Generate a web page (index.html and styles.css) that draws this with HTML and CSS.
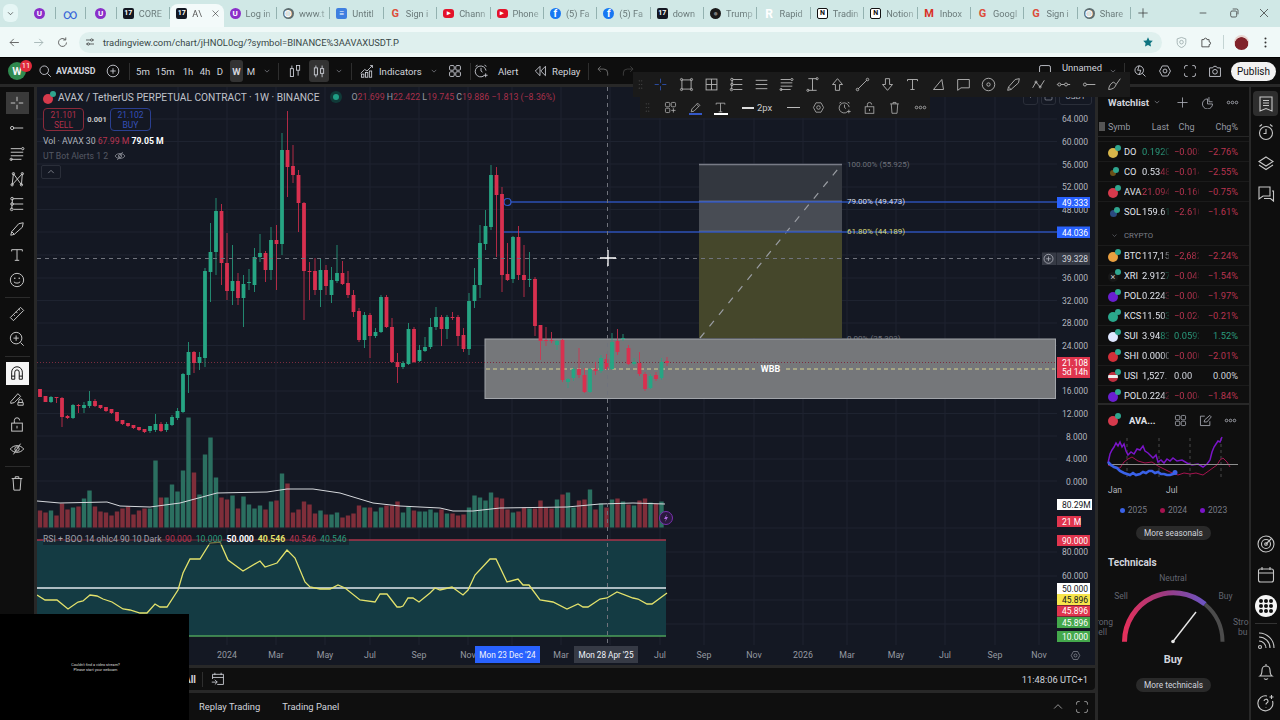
FILE: index.html
```html
<!DOCTYPE html>
<html lang="en">
<head>
  <meta charset="UTF-8">
  <title>AVAXUSD chart</title>
  <link rel="stylesheet" href="styles.css">
</head>
<body>
  <svg class="sprite" width="0" height="0">
    <symbol id="i-back" viewBox="0 0 18 18"><path d="M15 9H3M8 4L3 9l5 5"/></symbol>
    <symbol id="i-forward" viewBox="0 0 18 18"><path d="M3 9h12M10 4l5 5-5 5"/></symbol>
    <symbol id="i-reload" viewBox="0 0 18 18"><path d="M14.5 9a5.5 5.5 0 1 1-1.6-3.9M13.5 2v3.5H10"/></symbol>
    <symbol id="i-tune" viewBox="0 0 18 18"><path d="M3 6h7M13 6h2M3 12h2M8 12h7"/><circle cx="11.5" cy="6" r="1.7"/><circle cx="6.5" cy="12" r="1.7"/></symbol>
    <symbol id="i-star" viewBox="0 0 18 18"><path class="solid" d="M9 2l2.2 4.6 5 .7-3.6 3.5.9 5L9 13.4l-4.5 2.4.9-5L1.8 7.3l5-.7z"/></symbol>
    <symbol id="i-shield" viewBox="0 0 18 18"><path d="M9 2l6 2v5c0 4-3 6-6 7-3-1-6-3-6-7V4z"/><circle cx="9" cy="8.5" r="2.5"/></symbol>
    <symbol id="i-puzzle" viewBox="0 0 18 18"><path d="M4 5h3a2 2 0 0 1 4 0h3v3a2 2 0 0 1 0 4v3H4z"/></symbol>
    <symbol id="i-kebab" viewBox="0 0 18 18"><circle class="solid" cx="9" cy="3.5" r="1.4"/><circle class="solid" cx="9" cy="9" r="1.4"/><circle class="solid" cx="9" cy="14.5" r="1.4"/></symbol>
    <symbol id="i-search" viewBox="0 0 18 18"><circle cx="8" cy="8" r="5.5"/><path d="M12 12l4.5 4.5"/></symbol>
    <symbol id="i-plus-circle" viewBox="0 0 18 18"><circle cx="9" cy="9" r="7.5"/><path d="M9 5.5v7M5.5 9h7"/></symbol>
    <symbol id="i-chev" viewBox="0 0 18 18"><path d="M5 7l4 4 4-4"/></symbol>
    <symbol id="i-bars" viewBox="0 0 18 18"><rect x="3" y="6" width="4" height="10"/><rect x="11" y="2" width="4" height="6"/><path d="M5 2v4M13 8v7"/></symbol>
    <symbol id="i-candle" viewBox="0 0 18 18"><rect x="3" y="5" width="4" height="9"/><rect x="11" y="6" width="4" height="6"/><path d="M5 2v3M5 14v3M13 2v4M13 12v5"/></symbol>
    <symbol id="i-ind" viewBox="0 0 18 18"><path d="M1 12l5-5 3 2 7-7M13 2h3v3"/><rect x="2" y="13" width="3" height="4"/><rect x="7" y="11" width="3" height="6"/><rect x="12" y="9" width="3" height="8"/></symbol>
    <symbol id="i-grid" viewBox="0 0 18 18"><rect x="2" y="2" width="6" height="6" rx="1.5"/><rect x="10" y="2" width="6" height="6" rx="1.5"/><rect x="2" y="10" width="6" height="6" rx="1.5"/><rect x="10" y="10" width="6" height="6" rx="1.5"/></symbol>
    <symbol id="i-grid-plus" viewBox="0 0 18 18"><rect x="2" y="2" width="6" height="6" rx="1.5"/><rect x="10" y="2" width="6" height="6" rx="1.5"/><rect x="2" y="10" width="6" height="6" rx="1.5"/><path d="M13 10v6M10 13h6"/></symbol>
    <symbol id="i-alarm" viewBox="0 0 18 18"><path d="M13 15A7 7 0 1 1 15.5 8.5M9 5v4l2 1.5M2 3l2.5-1.5M16 3l-2.500-1.500M15 12v5M12.5 14.5h5"/></symbol>
    <symbol id="i-clock" viewBox="0 0 18 18"><circle cx="9" cy="10" r="6.5"/><path d="M9 6v4.5H6.5M2.5 3.500L5 1.5M15.5 3.5L13 1.5"/></symbol>
    <symbol id="i-replay" viewBox="0 0 18 18"><path d="M9 3L3 9l6 6zM16 3l-6 6 6 6z"/></symbol>
    <symbol id="i-undo" viewBox="0 0 18 18"><path d="M6 3L2.5 6.5 6 10M3 6.5h7a5 5 0 0 1 5 5V15"/></symbol>
    <symbol id="i-redo" viewBox="0 0 18 18"><path d="M12 3l3.5 3.5L12 10M15 6.5H8a5 5 0 0 0-5 5V15"/></symbol>
    <symbol id="i-square" viewBox="0 0 18 18"><rect x="2" y="2" width="14" height="14" rx="2"/></symbol>
    <symbol id="i-quick" viewBox="0 0 18 18"><circle cx="8" cy="8" r="5.5"/><path d="M12 12l4 4M8 2l-2 6h4l-2 6"/></symbol>
    <symbol id="i-hex" viewBox="0 0 18 18"><path d="M5.5 2.5h7L16 9l-3.5 6.500h-7L2 9z"/><circle cx="9" cy="9" r="2.5"/></symbol>
    <symbol id="i-full" viewBox="0 0 18 18"><path d="M2 6V4a2 2 0 0 1 2-2h2M12 2h2a2 2 0 0 1 2 2v2M16 12v2a2 2 0 0 1-2 2h-2M6 16H4a2 2 0 0 1-2-2v-2"/></symbol>
    <symbol id="i-camera" viewBox="0 0 18 18"><path d="M2 5h4l1.5-2h3L12 5h4v11H2z"/><circle cx="9" cy="10" r="3"/></symbol>
    <symbol id="i-cross" viewBox="0 0 18 18"><path d="M9 2v5M9 11v5M2 9h5M11 9h5"/></symbol>
    <symbol id="i-trend" viewBox="0 0 18 18"><circle cx="3.5" cy="9" r="1.8"/><path d="M5.3 9H16"/></symbol>
    <symbol id="i-ray" viewBox="0 0 18 18"><circle cx="4" cy="9" r="1.8"/><circle cx="12" cy="9" r="1.8"/><path d="M1 9h1M6 9h4M14 9h3"/></symbol>
    <symbol id="i-fib" viewBox="0 0 18 18"><path d="M2 3h12M2 7h14M2 11h14M2 15h12"/><circle cx="15.5" cy="3" r="1.3"/><circle cx="2.5" cy="15" r="1.3"/></symbol>
    <symbol id="i-lines" viewBox="0 0 18 18"><path d="M2 4h14M2 9h14M2 14h14"/></symbol>
    <symbol id="i-xabcd" viewBox="0 0 18 18"><path d="M3.5 15.5L5 3l9 12.5L15 3M3.5 15.5L15 3"/><circle cx="5" cy="3" r="1.3"/><circle cx="15" cy="3" r="1.3"/><circle cx="3.5" cy="15.5" r="1.3"/><circle cx="14" cy="15.5" r="1.3"/></symbol>
    <symbol id="i-pitch" viewBox="0 0 18 18"><path d="M5 3h11M5 9h11M5 15h11M4 3L3 15"/><circle cx="3.5" cy="3" r="1.5"/><circle cx="3.5" cy="9" r="1.5"/><circle cx="3" cy="15" r="1.5"/></symbol>
    <symbol id="i-brush" viewBox="0 0 18 18"><path d="M2 16l1-4 8-9 5-1-1 5-9 8zM3 12l3 3"/></symbol>
    <symbol id="i-pencil" viewBox="0 0 18 18"><path d="M3 15l1-4 8-8 3 3-8 8zM10.5 4.5l3 3"/></symbol>
    <symbol id="i-text" viewBox="0 0 18 18"><path d="M3 3h12v2M3 3v2M9 3v12M6.5 15h5"/></symbol>
    <symbol id="i-smile" viewBox="0 0 18 18"><circle cx="9" cy="9" r="7.5"/><circle class="solid" cx="6.5" cy="7" r=".9"/><circle class="solid" cx="11.5" cy="7" r=".9"/><path d="M5.5 11c1 2 6 2 7 0"/></symbol>
    <symbol id="i-ruler" viewBox="0 0 18 18"><path d="M1.5 13L13 1.5 16.5 5 5 16.5zM5 9.5l1.5 1.5M8 6.5L9.5 8M11 3.5L12.5 5"/></symbol>
    <symbol id="i-zoom" viewBox="0 0 18 18"><circle cx="8" cy="8" r="6.5"/><path d="M13 13l3.5 3.5M8 5v6M5 8h6"/></symbol>
    <symbol id="i-magnet" viewBox="0 0 18 18"><path d="M3 16V8a6 6 0 0 1 12 0v8h-3.500V8a2.500 2.500 0 0 0-5 0v8zM3 12.5h3.5M11.5 12.5H15"/></symbol>
    <symbol id="i-pen-lock" viewBox="0 0 18 18"><path d="M2 12L10 3l3 3-7 7-4 1zM10 16v-3h6v3zM11 13v-2a2 2 0 0 1 4 0v2"/></symbol>
    <symbol id="i-lock" viewBox="0 0 18 18"><rect x="3" y="8" width="12" height="9"/><path d="M6 8V5a3 3 0 0 1 6 0M9 11v3"/></symbol>
    <symbol id="i-trash" viewBox="0 0 18 18"><path d="M3 4h12M7 4V2h4v2M4.5 4l1 13h7l1-13"/></symbol>
    <symbol id="i-eye-off" viewBox="0 0 18 18"><path d="M1.5 9C5 4 13 4 16.5 9 13 14 5 14 1.5 9zM5 15L13 3"/><circle cx="9" cy="9" r="2.5"/></symbol>
    <symbol id="i-up" viewBox="0 0 18 18"><path d="M4 11l5-5 5 5"/></symbol>
    <symbol id="i-arrow-up" viewBox="0 0 18 18"><path d="M9 2L3 9h3.5v7h5V9H15z"/></symbol>
    <symbol id="i-arrow-down" viewBox="0 0 18 18"><path d="M9 16L3 9h3.5V2h5v7H15z"/></symbol>
    <symbol id="i-box" viewBox="0 0 18 18"><rect x="3.5" y="3.5" width="11" height="11"/><circle cx="3" cy="3" r="1.3"/><circle cx="15" cy="3" r="1.3"/><circle cx="3" cy="15" r="1.3"/><circle cx="15" cy="15" r="1.3"/></symbol>
    <symbol id="i-box-grid" viewBox="0 0 18 18"><rect x="2.5" y="2.5" width="13" height="13"/><path d="M9 2.5v13M2.5 9h13"/></symbol>
    <symbol id="i-ibar" viewBox="0 0 18 18"><path d="M4 2h10M4 16h10M9 2v14"/><circle cx="14.5" cy="2" r="1.3"/><circle cx="3.5" cy="16" r="1.3"/></symbol>
    <symbol id="i-line" viewBox="0 0 18 18"><path d="M3.5 14.5l11-11"/><circle cx="3" cy="15" r="1.5"/><circle cx="15" cy="3" r="1.5"/></symbol>
    <symbol id="i-tri" viewBox="0 0 18 18"><path d="M3 15L13 3l2 12z"/></symbol>
    <symbol id="i-note" viewBox="0 0 18 18"><path d="M2 3h14v10H6l-4 3z"/></symbol>
    <symbol id="i-circle" viewBox="0 0 18 18"><circle cx="9" cy="9" r="7.5"/><circle cx="9" cy="9" r="2"/></symbol>
    <symbol id="i-zig" viewBox="0 0 18 18"><path d="M2 13l4-7 5 6 5-8"/><circle cx="6" cy="6" r="1.2"/><circle cx="11" cy="12" r="1.2"/></symbol>
    <symbol id="i-eraser" viewBox="0 0 18 18"><path d="M2 15c0-4 3-8 6-9l3 3c-1 4-5 6-9 6zM11 9l5-7"/></symbol>
    <symbol id="i-dots" viewBox="0 0 18 18"><circle cx="3.5" cy="9" r="1.8"/><circle cx="9" cy="9" r="1.8"/><circle cx="14.5" cy="9" r="1.8"/></symbol>
    <symbol id="i-grip" viewBox="0 0 18 18"><circle class="solid" cx="7" cy="3" r="1"/><circle class="solid" cx="11" cy="3" r="1"/><circle class="solid" cx="7" cy="9" r="1"/><circle class="solid" cx="11" cy="9" r="1"/><circle class="solid" cx="7" cy="15" r="1"/><circle class="solid" cx="11" cy="15" r="1"/></symbol>
    <symbol id="i-plus" viewBox="0 0 18 18"><path d="M9 2v14M2 9h14"/></symbol>
    <symbol id="i-pie" viewBox="0 0 18 18"><path d="M9 4a7 7 0 1 0 7 7H9zM11 1.5V8h5"/></symbol>
    <symbol id="i-list" viewBox="0 0 18 18"><path d="M3 2h12v14l-6-2.5L3 16zM6 5.5h6M6 8h6M6 10.5h6"/></symbol>
    <symbol id="i-layers" viewBox="0 0 18 18"><path d="M9 3l7 4.5-7 4.5-7-4.5zM2 11l7 4.5 7-4.5"/></symbol>
    <symbol id="i-chat" viewBox="0 0 18 18"><path d="M2 2h11v9H6l-4 3zM15 6h1.5v10l-3-2.5H7"/></symbol>
    <symbol id="i-edit" viewBox="0 0 18 18"><path d="M15 10v6H2V3h6M7 11l1-3 7-6 2 2-6 7z"/></symbol>
    <symbol id="i-target" viewBox="0 0 18 18"><circle cx="9" cy="9" r="8"/><circle cx="9" cy="9" r="4.5"/><circle cx="9" cy="9" r="1.3"/><path d="M9 9l5.5-5.5"/></symbol>
    <symbol id="i-cal" viewBox="0 0 18 18"><rect x="1.5" y="3" width="15" height="13" rx="2"/><path d="M1.5 7h15M5 1v3M13 1v3"/></symbol>
    <symbol id="i-cal-go" viewBox="0 0 18 18"><path d="M2 9V3h14v13H8M2 7h14M5 1v3M13 1v3M1 13h7M5 10l3 3-3 3"/></symbol>
    <symbol id="i-signal" viewBox="0 0 18 18"><path d="M2 9a7 7 0 0 1 7 7M2 5a11 11 0 0 1 11 11M2 1a15 15 0 0 1 15 15"/><circle cx="3" cy="15" r="1.5"/></symbol>
    <symbol id="i-bell" viewBox="0 0 18 18"><path d="M3 13c1.5-1 2-3 2-6a4 4 0 0 1 8 0c0 3 .5 5 2 6zM7 15.5c1 1.2 3 1.2 4 0M9 1v2"/></symbol>
    <symbol id="i-help" viewBox="0 0 18 18"><path d="M15.5 7A7.5 7.5 0 1 1 10 2"/><path d="M7 7a2 2 0 1 1 2.8 2c-.6.4-.8.7-.8 1.5M9 13v.5M14.5 1v4M12.5 3h4"/></symbol>
    <symbol id="i-min" viewBox="0 0 18 18"><path d="M4 9h10"/></symbol>
    <symbol id="i-restore" viewBox="0 0 18 18"><rect x="4" y="6" width="9" height="9" rx="2"/><path d="M7 3h6a2 2 0 0 1 2 2v6"/></symbol>
    <symbol id="i-close" viewBox="0 0 18 18"><path d="M3 3l12 12M15 3L3 15"/></symbol>
  </svg>

  <div class="page">
    <header class="tabstrip">
      <button class="tab-menu"><svg class="icon"><use href="#i-chev"/></svg></button>
      <div class="tab pinned"><span class="fav fav-proton">U</span></div>
      <div class="tab pinned"><span class="fav fav-meta">∞</span></div>
      <div class="tab pinned"><span class="fav fav-proton">U</span></div>
      <div class="tab"><span class="fav fav-tv">17</span><span class="tab-title">CORE</span></div>
      <div class="tab active"><span class="fav fav-tv">17</span><span class="tab-title">A\</span><svg class="icon tab-x"><use href="#i-close"/></svg></div>
      <div class="tab"><span class="fav fav-proton">U</span><span class="tab-title">Log in</span></div>
      <div class="tab"><span class="fav fav-globe">◍</span><span class="tab-title">www.t</span></div>
      <div class="tab"><span class="fav fav-doc">≡</span><span class="tab-title">Untitl</span></div>
      <div class="tab"><span class="fav fav-g">G</span><span class="tab-title">Sign i</span></div>
      <div class="tab"><span class="fav fav-yt">▸</span><span class="tab-title">Chann</span></div>
      <div class="tab"><span class="fav fav-yt">▸</span><span class="tab-title">Phone</span></div>
      <div class="tab"><span class="fav fav-fb">f</span><span class="tab-title">(5) Fa</span></div>
      <div class="tab"><span class="fav fav-fb">f</span><span class="tab-title">(5) Fa</span></div>
      <div class="tab"><span class="fav fav-tv">17</span><span class="tab-title">down</span></div>
      <div class="tab"><span class="fav fav-trump">●</span><span class="tab-title">Trump</span></div>
      <div class="tab"><span class="fav fav-rapid">R</span><span class="tab-title">Rapid</span></div>
      <div class="tab"><span class="fav fav-notion">N</span><span class="tab-title">Tradin</span></div>
      <div class="tab"><span class="fav fav-notion">N</span><span class="tab-title">Notion</span></div>
      <div class="tab"><span class="fav fav-gmail">M</span><span class="tab-title">Inbox</span></div>
      <div class="tab"><span class="fav fav-g">G</span><span class="tab-title">Googl</span></div>
      <div class="tab"><span class="fav fav-g">G</span><span class="tab-title">Sign i</span></div>
      <div class="tab"><span class="fav fav-globe">◍</span><span class="tab-title">Share</span></div>
      <svg class="icon tab-new"><use href="#i-plus"/></svg>
      <div class="win-controls">
        <svg class="icon"><use href="#i-min"/></svg>
        <svg class="icon"><use href="#i-restore"/></svg>
        <svg class="icon"><use href="#i-close"/></svg>
      </div>
    </header>

    <nav class="navrow">
      <svg class="icon nav-btn"><use href="#i-back"/></svg>
      <svg class="icon nav-btn faded"><use href="#i-forward"/></svg>
      <svg class="icon nav-btn"><use href="#i-reload"/></svg>
      <div class="urlbar">
        <svg class="icon site-btn"><use href="#i-tune"/></svg>
        <span class="url">tradingview.com/chart/jHNOL0cg/?symbol=BINANCE%3AAVAXUSDT.P</span>
        <svg class="icon star"><use href="#i-star"/></svg>
      </div>
      <svg class="icon ext shield"><use href="#i-shield"/></svg>
      <svg class="icon ext"><use href="#i-puzzle"/></svg>
      <span class="nav-sep"></span>
      <span class="avatar"></span>
      <svg class="icon ext"><use href="#i-kebab"/></svg>
    </nav>

    <div class="topbar">
      <div class="topbar-left">
        <div class="logo"><span class="logo-w">W</span><span class="logo-badge">11</span></div>
        <svg class="icon tb-icon"><use href="#i-search"/></svg>
        <span class="tb-symbol">AVAXUSD</span>
        <svg class="icon tb-icon"><use href="#i-plus-circle"/></svg>
        <span class="tb-sep"></span>
        <span class="tb-int">5m</span>
        <span class="tb-int">15m</span>
        <span class="tb-int">1h</span>
        <span class="tb-int">4h</span>
        <span class="tb-int">D</span>
        <span class="tb-int on">W</span>
        <span class="tb-int">M</span>
        <svg class="icon tb-chev"><use href="#i-chev"/></svg>
        <span class="tb-sep"></span>
        <svg class="icon tb-icon"><use href="#i-bars"/></svg>
        <span class="tb-on"><svg class="icon tb-icon"><use href="#i-candle"/></svg></span>
        <svg class="icon tb-chev"><use href="#i-chev"/></svg>
        <span class="tb-sep"></span>
        <span class="tb-btn tb-ind"><svg class="icon tb-icon"><use href="#i-ind"/></svg>Indicators</span>
        <svg class="icon tb-chev"><use href="#i-chev"/></svg>
        <svg class="icon tb-icon"><use href="#i-grid"/></svg>
        <span class="tb-sep"></span>
        <span class="tb-btn tb-alert"><svg class="icon tb-icon"><use href="#i-alarm"/></svg>Alert</span>
        <span class="tb-btn tb-replay"><svg class="icon tb-icon"><use href="#i-replay"/></svg>Replay</span>
        <span class="tb-sep"></span>
        <svg class="icon tb-icon dim"><use href="#i-undo"/></svg>
        <svg class="icon tb-icon dimmer"><use href="#i-redo"/></svg>
      </div>
      <div class="topbar-right">
        <svg class="icon tb-icon"><use href="#i-square"/></svg>
        <span class="tb-layout">Unnamed</span>
        <svg class="icon tb-chev"><use href="#i-chev"/></svg>
        <span class="tb-sep"></span>
        <svg class="icon tb-icon"><use href="#i-quick"/></svg>
        <svg class="icon tb-icon"><use href="#i-hex"/></svg>
        <svg class="icon tb-icon"><use href="#i-full"/></svg>
        <svg class="icon tb-icon"><use href="#i-camera"/></svg>
        <button class="publish">Publish</button>
      </div>
    </div>

    <main class="workspace">
      <aside class="lefttools">
        <span class="tool on"><svg class="icon"><use href="#i-cross"/></svg></span>
        <span class="tool"><svg class="icon"><use href="#i-trend"/></svg></span>
        <span class="tool"><svg class="icon"><use href="#i-fib"/></svg></span>
        <span class="tool"><svg class="icon"><use href="#i-xabcd"/></svg></span>
        <span class="tool"><svg class="icon"><use href="#i-pitch"/></svg></span>
        <span class="tool"><svg class="icon"><use href="#i-brush"/></svg></span>
        <span class="tool"><svg class="icon"><use href="#i-text"/></svg></span>
        <span class="tool"><svg class="icon"><use href="#i-smile"/></svg></span>
        <span class="tool-sep"></span>
        <span class="tool"><svg class="icon"><use href="#i-ruler"/></svg></span>
        <span class="tool"><svg class="icon"><use href="#i-zoom"/></svg></span>
        <span class="tool-sep"></span>
        <span class="tool white"><svg class="icon"><use href="#i-magnet"/></svg></span>
        <span class="tool"><svg class="icon"><use href="#i-pen-lock"/></svg></span>
        <span class="tool"><svg class="icon"><use href="#i-lock"/></svg></span>
        <span class="tool"><svg class="icon"><use href="#i-eye-off"/></svg></span>
        <span class="tool-sep"></span>
        <span class="tool"><svg class="icon"><use href="#i-trash"/></svg></span>
      </aside>

      <section class="center">
        <div class="chart-pane">
          <svg class="chart" viewBox="37 87 1058 578" width="1058" height="578">
            <g class="grid" id="grid"></g>

            <!-- fib box -->
            <rect class="fib-a" x="699" y="164" width="143" height="37"/>
            <rect class="fib-b" x="699" y="201" width="143" height="30"/>
            <rect class="fib-c" x="699" y="231" width="143" height="107"/>
            <path class="fib-top" d="M699 164.5H842"/>
            <path class="fib-79" d="M699 201.5H842"/>
            <path class="fib-62" d="M699 231.5H842"/>
            <path class="fib-diag" d="M700 338L842 164"/>
            <text class="fib-label grey" x="847" y="167">100.00% (55.925)</text>
            <text class="fib-label grey" x="847" y="341">0.00% (25.303)</text>

            <path class="hline-blue" d="M511 202H1057M503 232H1057"/>
            <circle class="anchor" cx="507.5" cy="202" r="3.5"/>
            <text class="fib-label light" x="847" y="204">79.00% (49.473)</text>
            <text class="fib-label yellow" x="847" y="234">61.80% (44.189)</text>

            <!-- WBB box -->
            <rect class="wbb" x="485" y="339" width="570.5" height="59.5"/>
            <path class="price-dots" d="M37 362.5H1057"/>
            <path class="wbb-mid" d="M486 369H755M786 369H1055"/>
            <text class="wbb-label" x="770.5" y="372">WBB</text>

            <g id="volume"></g>
            <polyline class="vol-ma" points="37,501 60,503 107,502 120,506 150,507 180,503 217,493 267,492 287,489 313,489 340,493 373,503 400,506 440,508 453,511 473,511 500,508 567,507 600,504 633,503 665,504"/>
            <g id="candles"></g>

            <!-- rsi pane -->
            <rect class="rsi-fill" x="37" y="540" width="629" height="96"/>
            <path class="rsi-red" d="M37 540H666"/>
            <path class="rsi-mid" d="M37 588H666"/>
            <path class="rsi-green" d="M37 636H666"/>
            <polyline class="rsi-line" points="37,595 45,600 57,600 68,609 78,602 83,601 90,595 97,596 103,599 112,602 123,609 130,610 140,613 147,613 155,604 160,607 167,607 178,590 183,573 190,559 200,559 210,543 220,542 228,560 243,571 260,561 265,567 277,563 287,550 295,558 305,582 310,587 320,589 330,589 338,585 345,588 360,600 375,602 380,594 387,594 397,607 400,607 403,606 408,598 413,598 419,602 430,593 435,588 440,590 452,587 463,595 468,590 475,575 490,559 496,559 507,582 518,579 523,585 529,585 540,600 553,602 567,609 578,604 583,607 588,607 600,599 607,598 617,592 633,598 638,599 647,604 652,604 667,593"/>
            <circle class="flash-ring" cx="666" cy="518" r="6.5"/>
            <path class="flash" d="M667 514l-3 5h2l-1 3 3-5h-2z"/>

            <!-- crosshair -->
            <path class="crosshair" d="M37 258.500H1040M607.5 87V645"/>
            <path class="cursor" d="M608 250v16M600 258h16"/>

            <!-- price axis -->
            <g class="axis-text">
              <text x="1062" y="122">64.000</text>
              <text x="1062" y="145">60.000</text>
              <text x="1062" y="167.5">56.000</text>
              <text x="1062" y="190">52.000</text>
              <text x="1062" y="212.5">48.000</text>
              <text x="1062" y="281">36.000</text>
              <text x="1062" y="303.5">32.000</text>
              <text x="1062" y="326">28.000</text>
              <text x="1062" y="349">24.000</text>
              <text x="1062" y="394">16.000</text>
              <text x="1062" y="417">12.000</text>
              <text x="1066" y="439.5">8.000</text>
              <text x="1066" y="462">4.000</text>
              <text x="1066" y="484.5">0.000</text>
              <text x="1062" y="555">80.000</text>
              <text x="1062" y="579">60.000</text>
            </g>
            <g class="tags">
              <rect class="tag-blue" x="1057" y="197" width="33" height="11"/><text x="1062" y="205.5" class="t-white">49.333</text>
              <rect class="tag-blue" x="1057" y="226.5" width="33" height="11.5"/><text x="1062" y="235.5" class="t-white">44.036</text>
              <rect class="tag-grey" x="1057" y="252.5" width="33" height="12.5"/><text x="1062" y="262" class="t-light">39.328</text>
              <rect class="tag-grey" x="1042" y="252.5" width="14.5" height="12.5"/>
              <circle class="tag-plus" cx="1048.5" cy="258.8" r="4.5"/><path class="tag-plus" d="M1048.5 256.5v4.6M1046.2 258.8h4.6"/>
              <rect class="tag-red" x="1057" y="357" width="33" height="21"/><text x="1062" y="365.5" class="t-white">21.108</text><text x="1062" y="375" class="t-white">5d 14h</text>
              <rect class="tag-white" x="1057" y="499" width="35" height="11"/><text x="1062" y="507.5" class="t-dark">80.29M</text>
              <rect class="tag-red" x="1057" y="516" width="24" height="11"/><text x="1062" y="524.5" class="t-white">21 M</text>
              <rect class="tag-red" x="1057" y="535" width="33" height="11"/><text x="1062" y="543.5" class="t-white">90.000</text>
              <rect class="tag-white" x="1057" y="583" width="33" height="11"/><text x="1062" y="591.5" class="t-dark">50.000</text>
              <rect class="tag-yellow" x="1057" y="594" width="33" height="11"/><text x="1062" y="602.5" class="t-dark">45.896</text>
              <rect class="tag-red" x="1057" y="605.5" width="33" height="11"/><text x="1062" y="614" class="t-white">45.896</text>
              <rect class="tag-green" x="1057" y="617" width="33" height="11"/><text x="1062" y="625.5" class="t-white">45.896</text>
              <rect class="tag-green" x="1057" y="631" width="33" height="11"/><text x="1062" y="639.5" class="t-white">10.000</text>
            </g>

            <!-- time axis -->
            <g class="time-text">
              <text x="227" y="658">2024</text>
              <text x="276" y="658">Mar</text>
              <text x="325" y="658">May</text>
              <text x="370" y="658">Jul</text>
              <text x="419" y="658">Sep</text>
              <text x="468" y="658">Nov</text>
              <text x="561" y="658">Mar</text>
              <text x="660" y="658">Jul</text>
              <text x="704" y="658">Sep</text>
              <text x="754" y="658">Nov</text>
              <text x="803" y="658">2026</text>
              <text x="847" y="658">Mar</text>
              <text x="896" y="658">May</text>
              <text x="945" y="658">Jul</text>
              <text x="995" y="658">Sep</text>
              <text x="1039" y="658">Nov</text>
            </g>
            <rect class="tag-time-blue" x="475" y="646" width="65" height="17"/>
            <text class="time-tag" x="507.5" y="658">Mon 23 Dec '24</text>
            <rect class="tag-time-grey" x="574" y="646" width="64" height="17"/>
            <text class="time-tag" x="606" y="658">Mon 28 Apr '25</text>
            <use class="axis-gear" href="#i-hex" x="1070" y="650" width="11" height="11"/>
          </svg>

          <div class="legend">
            <div class="legend-title">
              <span class="coin coin-ava"></span>
              <span class="legend-name">AVAX / TetherUS PERPETUAL CONTRACT · 1W · BINANCE</span>
              <span class="live-dot"></span>
              <span class="ohlc"><b>O</b>21.699 <b>H</b>22.422 <b>L</b>19.745 <b>C</b>19.886 −1.813 (−8.36%)</span>
            </div>
            <div class="trade-row">
              <div class="trade sell"><span>21.101</span><span>SELL</span></div>
              <span class="spread">0.001</span>
              <div class="trade buy"><span>21.102</span><span>BUY</span></div>
            </div>
            <div class="legend-vol">Vol · AVAX 30 <span class="val-red">67.99 M</span> <span class="val-white">79.05 M</span></div>
            <div class="legend-hidden">UT Bot Alerts 1 2 <svg class="icon"><use href="#i-eye-off"/></svg></div>
            <button class="legend-collapse"><svg class="icon"><use href="#i-up"/></svg></button>
          </div>

          <div class="rsi-legend">
            <span class="rsi-name">RSI + BOO 14 ohlc4 90 10 Dark</span>
            <span class="val-red">90.000</span>
            <span class="val-green">10.000</span>
            <span class="val-white">50.000</span>
            <span class="val-yellow">40.546</span>
            <span class="val-red">40.546</span>
            <span class="val-green">40.546</span>
          </div>

          <div class="scale-btns"><span class="scale-btn"><svg class="icon"><use href="#i-chev"/></svg></span><span class="scale-btn"><svg class="icon"><use href="#i-square"/></svg></span><span class="scale-btn wide">USDT</span></div>
        </div>

        <div class="rangebar">
          <span class="range-all">All</span>
          <span class="range-sep"></span>
          <svg class="icon"><use href="#i-cal-go"/></svg>
          <span class="clock">11:48:06 UTC+1</span>
        </div>

        <div class="bottomtabs">
          <span>Replay Trading</span>
          <span>Trading Panel</span>
          <svg class="icon bt-up"><use href="#i-up"/></svg>
          <svg class="icon bt-max"><use href="#i-full"/></svg>
        </div>
      </section>

      <section class="sidepanel">
        <div class="watchlist">
          <div class="wl-head">
            <span class="wl-title">Watchlist</span>
            <svg class="icon wl-chev"><use href="#i-chev"/></svg>
            <svg class="icon wl-btn"><use href="#i-plus"/></svg>
            <svg class="icon wl-btn"><use href="#i-pie"/></svg>
            <svg class="icon wl-btn"><use href="#i-dots"/></svg>
          </div>
          <div class="wl-cols">
            <span class="flag"></span>
            <span class="c-sym">Symb</span>
            <span class="c-last">Last</span>
            <span class="c-chg">Chg</span>
            <span class="c-pct">Chg%</span>
          </div>
          <div class="wl-row"><span class="coin coin-do"></span><span class="c-sym">DO</span><span class="c-last val-green">0.1920</span><span class="c-chg val-red">−0.005</span><span class="c-pct val-red">−2.76%</span></div>
          <div class="wl-row"><span class="coin coin-co"></span><span class="c-sym">CO</span><span class="c-last">0.53<span class="val-red">48</span></span><span class="c-chg val-red">−0.014</span><span class="c-pct val-red">−2.55%</span></div>
          <div class="wl-row"><span class="coin coin-ava"></span><span class="c-sym">AVA</span><span class="c-last val-red">21.094</span><span class="c-chg val-red">−0.160</span><span class="c-pct val-red">−0.75%</span></div>
          <div class="wl-row"><span class="coin coin-sol"></span><span class="c-sym">SOL</span><span class="c-last">159.6<span class="val-green">1</span></span><span class="c-chg val-red">−2.610</span><span class="c-pct val-red">−1.61%</span></div>
          <div class="wl-group"><svg class="icon"><use href="#i-chev"/></svg>CRYPTO</div>
          <div class="wl-row"><span class="coin coin-btc"></span><span class="c-sym">BTC</span><span class="c-last">117,15</span><span class="c-chg val-red">−2,682</span><span class="c-pct val-red">−2.24%</span></div>
          <div class="wl-row"><span class="coin coin-xrp">×</span><span class="c-sym">XRI</span><span class="c-last">2.912<span class="val-green">7</span></span><span class="c-chg val-red">−0.045</span><span class="c-pct val-red">−1.54%</span></div>
          <div class="wl-row"><span class="coin coin-pol"></span><span class="c-sym">POL</span><span class="c-last">0.224<span class="val-red">3</span></span><span class="c-chg val-red">−0.004</span><span class="c-pct val-red">−1.97%</span></div>
          <div class="wl-row"><span class="coin coin-kcs"></span><span class="c-sym">KCS</span><span class="c-last">11.50<span class="val-green">3</span></span><span class="c-chg val-red">−0.024</span><span class="c-pct val-red">−0.21%</span></div>
          <div class="wl-row"><span class="coin coin-sui"></span><span class="c-sym">SUI</span><span class="c-last">3.94<span class="val-green">83</span></span><span class="c-chg val-green">0.0592</span><span class="c-pct val-green">1.52%</span></div>
          <div class="wl-row"><span class="coin coin-shi"></span><span class="c-sym">SHI</span><span class="c-last">0.0000</span><span class="c-chg val-red">−0.000</span><span class="c-pct val-red">−2.01%</span></div>
          <div class="wl-row"><span class="coin coin-usd"></span><span class="c-sym">USI</span><span class="c-last">1,527.</span><span class="c-chg val-plain">0.00</span><span class="c-pct val-plain">0.00%</span></div>
          <div class="wl-row"><span class="coin coin-pol"></span><span class="c-sym">POL</span><span class="c-last">0.224<span class="val-red">2</span></span><span class="c-chg val-red">−0.004</span><span class="c-pct val-red">−1.84%</span></div>
        </div>

        <div class="details">
          <div class="det-head">
            <span class="coin coin-ava"></span>
            <span class="det-name">AVA...</span>
            <svg class="icon wl-btn"><use href="#i-grid"/></svg>
            <svg class="icon wl-btn"><use href="#i-edit"/></svg>
            <svg class="icon wl-btn"><use href="#i-dots"/></svg>
          </div>
          <svg class="seasonal" viewBox="1098 433 151 47" width="151" height="47">
            <path class="sea-guide" d="M1127 438V478M1159 438V478M1190 438V478M1221 438V478"/>
            <polyline class="sea-2023" points="1108,463 1110,454 1112,450 1114,447 1116,443 1118,446 1120,442 1122,447 1124,444 1126,451 1128,455 1131,452 1134,454 1137,449 1140,450 1143,446 1145,451 1148,453 1150,455 1153,458 1156,455 1158,462 1161,460 1164,463 1167,459 1170,461 1173,458 1177,461 1182,460 1187,463 1192,465 1198,464 1203,467 1207,464 1210,460 1212,452 1214,447 1216,444 1218,441 1220,442 1222,437"/>
            <polyline class="sea-2024" points="1108,465 1114,467 1120,468 1124,462 1128,459 1132,457 1138,461 1145,463 1152,462 1158,466 1162,468 1170,472 1178,475 1184,473 1190,474 1196,473 1203,475 1210,470 1217,465 1220,460 1223,458 1227,462 1230,467"/>
            <path class="sea-zero" d="M1108 464.5H1238"/>
            <polyline class="sea-2025" points="1108,462 1111,465 1114,467 1117,468 1120,471 1124,473 1127,474 1130,475 1133,473 1136,475 1140,474 1143,472 1146,473 1149,471 1152,471 1155,473 1158,472 1161,474 1164,474 1167,475 1170,475 1173,474 1175,473"/>
            <circle class="sea-dot" cx="1175" cy="472.5" r="2.5"/>
          </svg>
          <div class="sea-months"><span>Jan</span><span>Jul</span></div>
          <div class="sea-legend">
            <span class="sea-key"><i class="key-2025"></i>2025</span>
            <span class="sea-key"><i class="key-2024"></i>2024</span>
            <span class="sea-key"><i class="key-2023"></i>2023</span>
          </div>
          <button class="pill-btn">More seasonals</button>
          <div class="tech-title">Technicals</div>
          <svg class="gauge" viewBox="1098 570 151 100" width="151" height="100">
            <defs>
              <linearGradient id="gaugeGrad" gradientUnits="userSpaceOnUse" x1="1123" y1="0" x2="1206" y2="0">
                <stop offset="0" stop-color="#e6305a"/>
                <stop offset=".5" stop-color="#9c3a80"/>
                <stop offset="1" stop-color="#6b55c4"/>
              </linearGradient>
            </defs>
            <path class="gauge-rest" d="M1205 604.2A49 49 0 0 1 1222.5 641.7"/>
            <path class="gauge-on" d="M1124.5 641.7A49 49 0 0 1 1205 604.2"/>
            <path class="needle" d="M1173 641.5L1196 612"/>
            <circle class="needle-hub" cx="1173" cy="641.5" r="1.8"/>
            <text class="g-label" x="1173" y="581" text-anchor="middle">Neutral</text>
            <text class="g-label" x="1121" y="599" text-anchor="middle">Sell</text>
            <text class="g-label" x="1225.5" y="599" text-anchor="middle">Buy</text>
            <text class="g-label" x="1113" y="625" text-anchor="end">rong</text>
            <text class="g-label" x="1107" y="635" text-anchor="end">ell</text>
            <text class="g-label" x="1233" y="625">Stro</text>
            <text class="g-label" x="1238" y="635">bu</text>
            <text class="g-result" x="1173" y="663" text-anchor="middle">Buy</text>
          </svg>
          <button class="pill-btn tech-btn">More technicals</button>
        </div>
      </section>

      <aside class="rightbar">
        <div class="rb-top">
          <span class="rb-item on"><svg class="icon"><use href="#i-list"/></svg></span>
          <span class="rb-item"><svg class="icon"><use href="#i-clock"/></svg></span>
          <span class="rb-item"><svg class="icon"><use href="#i-layers"/></svg></span>
          <span class="rb-item"><svg class="icon"><use href="#i-chat"/></svg></span>
        </div>
        <div class="rb-bottom">
          <span class="rb-item"><svg class="icon"><use href="#i-target"/></svg></span>
          <span class="rb-item"><svg class="icon"><use href="#i-cal"/></svg></span>
          <span class="rb-item"><span class="rb-dots"><i></i><i></i><i></i><i></i><i></i><i></i><i></i><i></i><i></i></span></span>
          <span class="rb-sep"></span>
          <span class="rb-item"><svg class="icon"><use href="#i-signal"/></svg></span>
          <span class="rb-item"><svg class="icon"><use href="#i-bell"/></svg></span>
          <span class="rb-item"><svg class="icon"><use href="#i-help"/></svg></span>
        </div>
      </aside>
    </main>

    <!-- floating drawing toolbars, these lie over the top bar and the chart -->
    <div class="draw-bar draw-one">
      <svg class="icon grip"><use href="#i-grip"/></svg>
      <span class="dt blue"><svg class="icon"><use href="#i-cross"/></svg></span>
      <span class="dt"><svg class="icon"><use href="#i-box"/></svg></span>
      <span class="dt"><svg class="icon"><use href="#i-box-grid"/></svg></span>
      <span class="dt"><svg class="icon"><use href="#i-pitch"/></svg></span>
      <span class="dt"><svg class="icon"><use href="#i-lines"/></svg></span>
      <span class="dt"><svg class="icon"><use href="#i-fib"/></svg></span>
      <span class="dt"><svg class="icon"><use href="#i-ibar"/></svg></span>
      <span class="dt"><svg class="icon"><use href="#i-arrow-up"/></svg></span>
      <span class="dt"><svg class="icon"><use href="#i-line"/></svg></span>
      <span class="dt"><svg class="icon"><use href="#i-arrow-down"/></svg></span>
      <span class="dt"><svg class="icon"><use href="#i-text"/></svg></span>
      <span class="dt"><svg class="icon"><use href="#i-tri"/></svg></span>
      <span class="dt"><svg class="icon"><use href="#i-note"/></svg></span>
      <span class="dt"><svg class="icon"><use href="#i-circle"/></svg></span>
      <span class="dt"><svg class="icon"><use href="#i-brush"/></svg></span>
      <span class="dt"><svg class="icon"><use href="#i-zig"/></svg></span>
      <span class="dt"><svg class="icon"><use href="#i-ray"/></svg></span>
      <span class="dt"><svg class="icon"><use href="#i-trend"/></svg></span>
      <span class="dt"><svg class="icon"><use href="#i-eraser"/></svg></span>
    </div>
    <div class="draw-bar draw-two">
      <svg class="icon grip"><use href="#i-grip"/></svg>
      <span class="dt2"><svg class="icon"><use href="#i-grid-plus"/></svg></span>
      <span class="dt2 under-blue"><svg class="icon"><use href="#i-pencil"/></svg></span>
      <span class="dt2 under-white"><svg class="icon"><use href="#i-text"/></svg></span>
      <span class="dt2 dash"><i class="dash-line"></i>2px</span>
      <span class="dt2"><i class="thin-line"></i></span>
      <span class="dt2"><svg class="icon"><use href="#i-hex"/></svg></span>
      <span class="dt2"><svg class="icon"><use href="#i-alarm"/></svg></span>
      <span class="dt2"><svg class="icon"><use href="#i-lock"/></svg></span>
      <span class="dt2"><svg class="icon"><use href="#i-trash"/></svg></span>
      <span class="dt2"><svg class="icon"><use href="#i-dots"/></svg></span>
    </div>

    <!-- webcam placeholder covering the corner -->
    <div class="camera-box">
      <p>Couldn't find a video stream?<br>Please start your webcam</p>
    </div>
  </div>

  <script src="chart.js"></script>
</body>
</html>
```

FILE: styles.css
```css
* {
  box-sizing: border-box;
}

body {
  margin: 0;
  background: #000;
  font-family: Roboto, "Liberation Sans", sans-serif;
  color: #d1d4dc;
}

.sprite {
  position: absolute;
}

symbol path,
symbol rect,
symbol circle,
symbol polyline {
  fill: none;
  stroke: currentColor;
  stroke-width: 1.1;
}

symbol .solid {
  fill: currentColor;
  stroke: none;
}

.icon {
  width: 14px;
  height: 14px;
  flex: none;
}

.page {
  position: relative;
  width: 1280px;
  height: 720px;
  overflow: hidden;
  display: flex;
  flex-direction: column;
}

/* browser tabs */
.tabstrip {
  height: 27px;
  flex: none;
  display: flex;
  align-items: flex-end;
  background: #d0e8e6;
  position: relative;
}

.tab-menu {
  width: 15px;
  height: 18px;
  margin: 0 7px 5px 3px;
  padding: 0;
  border: none;
  border-radius: 6px;
  background: #e6f6f5;
  color: #333;
  display: flex;
  align-items: center;
  justify-content: center;
}

.tab-menu .icon {
  width: 11px;
  height: 11px;
}

.tab {
  width: 53.4px;
  height: 23px;
  flex: none;
  display: flex;
  align-items: center;
  padding: 0 4px 4px 6px;
  gap: 5px;
  position: relative;
  font-size: 9.2px;
  color: #6a7a7a;
}

.tab::after {
  content: "";
  position: absolute;
  right: 0;
  top: 3px;
  height: 12px;
  border-right: 1px solid #93b2b0;
}

.tab.pinned {
  width: 30.6px;
  padding-left: 9px;
}

.tab.active {
  background: #f3fafa;
  border-radius: 8px 8px 0 0;
  color: #555;
}

.tab.active::after {
  display: none;
}

.tab-title {
  flex: 1;
  min-width: 0;
  white-space: nowrap;
  overflow: hidden;
  -webkit-mask-image: linear-gradient(to right, #000 65%, rgba(0, 0, 0, .35));
  mask-image: linear-gradient(to right, #000 65%, rgba(0, 0, 0, .35));
}

.tab-x {
  width: 9px;
  height: 9px;
  color: #222;
}

.tab-new {
  width: 12px;
  height: 12px;
  margin: 0 0 8px 6px;
  color: #333;
}

.fav {
  width: 11px;
  height: 11px;
  flex: none;
  display: flex;
  align-items: center;
  justify-content: center;
  font-size: 8px;
  font-weight: 700;
  line-height: 1;
  border-radius: 50%;
  color: #fff;
}

.fav-proton {
  background: #8a2fc9;
}

.fav-meta {
  color: #3765d8;
  font-size: 14px;
  font-weight: 400;
}

.fav-tv {
  background: #131722;
  border-radius: 2px;
  font-size: 7px;
}

.fav-globe {
  background: #5d6d70;
  font-size: 9px;
}

.fav-doc {
  background: #3f7fe0;
  border-radius: 2px;
}

.fav-g {
  color: #dd4d3a;
  font-size: 11px;
}

.fav-yt {
  background: #e3132a;
  border-radius: 3px;
  height: 9px;
  font-size: 7px;
}

.fav-fb {
  background: #1877f2;
  font-size: 10px;
}

.fav-trump {
  background: #1a1a1a;
  color: #777;
  font-size: 8px;
}

.fav-rapid {
  color: #fff;
  font-size: 12px;
}

.fav-notion {
  background: #fff;
  color: #111;
  border: 1px solid #111;
  border-radius: 2px;
  font-size: 7px;
}

.fav-gmail {
  color: #d93025;
  font-size: 11px;
}

.win-controls {
  position: absolute;
  right: 10px;
  top: 7px;
  display: flex;
  gap: 18.5px;
  color: #333;
}

.win-controls .icon {
  width: 12px;
  height: 12px;
}

/* address row */
.navrow {
  height: 30px;
  flex: none;
  display: flex;
  align-items: center;
  background: #f0f9f8;
  color: #444;
}

.nav-btn {
  width: 13px;
  height: 13px;
  margin-right: 11px;
}

.nav-btn:first-child {
  margin-left: 8px;
}

.nav-btn.faded {
  color: #9aa;
}

.urlbar {
  width: 1083px;
  height: 21px;
  margin-left: -1px;
  border-radius: 11px;
  background: #dff0ee;
  display: flex;
  align-items: center;
  padding-left: 5px;
}

.site-btn {
  width: 12px;
  height: 12px;
  color: #333;
}

.url {
  margin-left: 7px;
  font-size: 9.4px;
  color: #374747;
  white-space: nowrap;
}

.star {
  margin-left: auto;
  margin-right: 8px;
  width: 12px;
  height: 12px;
  color: #0e7480;
}

.ext {
  width: 13px;
  height: 13px;
  margin-left: 11px;
  color: #333;
}

.ext.shield {
  margin-left: 12.5px;
  color: #98a8a8;
}

.nav-sep {
  height: 14px;
  border-right: 1px solid #c4d4d3;
  margin-left: 11px;
}

.avatar {
  width: 15px;
  height: 15px;
  margin-left: 10px;
  background: radial-gradient(circle at 50% 60%, #80232a 55%, #e8d5d0 60%);
  border-radius: 50%;
}

.avatar + .ext {
  margin-left: 10px;
}

/* tradingview top bar */
.topbar {
  height: 26px;
  margin-top: 1px;
  flex: none;
  background: #0e0e0e;
  display: flex;
  justify-content: space-between;
  font-size: 9.6px;
  color: #d1d4dc;
}

.topbar-left {
  display: grid;
  grid-template-columns: 36px 18px 46px 26px 6px 22px 22px 24px 10px 20px 13px 16px 16px 6px 28px 20px 20px 4px 73px 16px 26px 4px 50px 61px 10px 20px 30px;
  align-items: center;
  justify-items: center;
}

.topbar-right {
  display: grid;
  grid-template-columns: 16px 52px 16px 6px 25px 25px 25px 25px 49px;
  align-items: center;
  justify-items: center;
  padding-right: 4px;
}

.logo {
  position: relative;
  justify-self: start;
  margin-left: 8px;
  width: 18px;
  height: 18px;
}

.logo-w {
  display: flex;
  align-items: center;
  justify-content: center;
  width: 18px;
  height: 18px;
  border-radius: 50%;
  background: #2f8a4f;
  color: #f3f3f3;
  font-size: 11px;
  font-weight: 700;
}

.logo-badge {
  position: absolute;
  top: -2px;
  left: 12px;
  width: 12px;
  height: 12px;
  border-radius: 50%;
  background: #e02a3b;
  color: #fff;
  font-size: 7.5px;
  text-align: center;
  line-height: 12px;
}

.tb-icon {
  width: 14px;
  height: 14px;
}

.tb-chev {
  width: 10px;
  height: 10px;
  color: #9598a1;
}

.dim {
  color: #777;
}

.dimmer {
  color: #444;
}

.tb-symbol {
  justify-self: start;
  margin-left: 2px;
  font-size: 8.8px;
  font-weight: 700;
}

.tb-sep {
  height: 17px;
  border-right: 1px solid #2e2e2e;
}

.tb-int {
  font-size: 9.6px;
}

.tb-int.on,
.tb-on {
  width: 100%;
  height: 22px;
  display: flex;
  align-items: center;
  justify-content: center;
  background: #333;
  border-radius: 3px;
  font-weight: 700;
}

.tb-btn {
  width: 100%;
  display: flex;
  align-items: center;
  gap: 5px;
  padding-left: 7px;
}

.tb-alert {
  padding-left: 2px;
  gap: 10px;
}

.tb-replay {
  padding-left: 11px;
}

.tb-layout {
  justify-self: start;
  margin: -7px 0 0 9px;
  font-size: 9.4px;
}

.publish {
  justify-self: end;
  width: 45px;
  height: 19px;
  padding: 0;
  border: none;
  border-radius: 10px;
  background: #f2f2f2;
  color: #111;
  font: 10px Roboto, sans-serif;
}

/* main area */
.workspace {
  flex: 1;
  min-height: 0;
  display: flex;
  background: #282828;
  padding-top: 3px;
}

.lefttools {
  width: 34px;
  margin-right: 3px;
  flex: none;
  padding-top: 3.3px;
  background: #0e0e0e;
  display: flex;
  flex-direction: column;
  align-items: center;
  color: #c8c8c8;
}

.tool {
  width: 23px;
  height: 25.3px;
  flex: none;
  display: flex;
  align-items: center;
  justify-content: center;
}

.tool .icon {
  width: 16px;
  height: 16px;
}

.tool.on {
  background: linear-gradient(#3a3a3a, #3a3a3a) center / 23px 22px no-repeat;
}

.tool.white {
  background: linear-gradient(#f5f5f5, #f5f5f5) center / 23px 23px no-repeat;
  color: #111;
}

.tool-sep {
  width: 25px;
  flex: none;
  margin: 3.9px 0;
  border-top: 1px solid #2c2c2c;
}

.center {
  width: 1058px;
  margin-right: 3px;
  flex: none;
  display: flex;
  flex-direction: column;
  gap: 3px;
}

.chart-pane {
  position: relative;
  height: 578px;
  flex: none;
  background: #141823;
  overflow: hidden;
}

.chart {
  display: block;
}

.grid path {
  stroke: #1e2330;
  stroke-width: 1;
  fill: none;
}

.fib-a {
  fill: #33373f;
}

.fib-b {
  fill: #484c54;
}

.fib-c {
  fill: #45472b;
}

.fib-top {
  stroke: #787b86;
  stroke-width: 1.5;
}

.fib-79 {
  stroke: #8a97b8;
  stroke-width: 1.5;
}

.fib-62 {
  stroke: #7d8690;
  stroke-width: 1.5;
}

.fib-diag {
  stroke: #9a9da3;
  stroke-width: 1.2;
  stroke-dasharray: 7 8;
}

.fib-label {
  font-size: 8px;
}

.grey {
  fill: #6d7079;
}

.light {
  fill: #d9dee8;
}

.yellow {
  fill: #d8d878;
}

.hline-blue {
  stroke: #2b4fb4;
  stroke-width: 1.3;
  fill: none;
}

.anchor {
  fill: #141823;
  stroke: #3358c8;
  stroke-width: 1.2;
}

.wbb {
  fill: #75777a;
  stroke: #a2a5aa;
  stroke-width: 1;
}

.price-dots {
  stroke: #7a2c3e;
  stroke-width: 1;
  stroke-dasharray: 1 2;
}

.wbb-mid {
  stroke: #d9d48f;
  stroke-width: 1;
  stroke-dasharray: 4 3;
  fill: none;
}

.wbb-label {
  font-size: 9px;
  font-weight: 700;
  fill: #fff;
  text-anchor: middle;
}

.vol-ma {
  fill: none;
  stroke: #d5d8dc;
  stroke-width: 1;
}

.rsi-fill {
  fill: #143b43;
}

.rsi-red {
  stroke: #a8344a;
  stroke-width: 1.5;
}

.rsi-mid {
  stroke: #e0e8ec;
  stroke-width: 1.5;
}

.rsi-green {
  stroke: #4da05a;
  stroke-width: 1.5;
}

.rsi-line {
  fill: none;
  stroke: #e3e26c;
  stroke-width: 1.3;
}

.flash-ring {
  fill: #2a1a3e;
  stroke: #7a2fb0;
  stroke-width: 1;
}

.flash {
  fill: #b06ae0;
}

.crosshair {
  stroke: #70737c;
  stroke-width: 1;
  stroke-dasharray: 4 4;
  fill: none;
}

.cursor {
  stroke: #fff;
  stroke-width: 1.3;
}

.axis-text text {
  font-size: 8.5px;
  fill: #b2b5be;
}

.tags text {
  font-size: 8.5px;
}

.t-white {
  fill: #fff;
}

.t-light {
  fill: #d1d4dc;
}

.t-dark {
  fill: #131722;
}

.tag-blue,
.tag-time-blue {
  fill: #2962ff;
}

.tag-grey,
.tag-time-grey {
  fill: #363a45;
}

.tag-red {
  fill: #e0354e;
}

.tag-white {
  fill: #fff;
}

.tag-yellow {
  fill: #f7e54b;
}

.tag-green {
  fill: #44a84c;
}

.tag-plus {
  fill: none;
  stroke: #b2b5be;
  stroke-width: .8;
}

.time-text text {
  font-size: 8.8px;
  fill: #9598a1;
  text-anchor: middle;
}

.time-tag {
  font-size: 8.2px;
  fill: #f0f3fa;
  text-anchor: middle;
}

.axis-gear {
  color: #9598a1;
}

.legend {
  position: absolute;
  left: 6px;
  top: 3px;
  font-size: 8.7px;
  white-space: nowrap;
}

.legend-title {
  display: flex;
  align-items: center;
  height: 14px;
}

.legend-name {
  margin-left: 5px;
  font-size: 10.2px;
  color: #c0c3cb;
}

.live-dot {
  width: 6px;
  height: 6px;
  margin-left: 13px;
  border-radius: 50%;
  background: #1f9d84;
  box-shadow: 0 0 0 3px #103a38;
}

.ohlc {
  margin-left: 13px;
  font-size: 8.8px;
  color: #a8304a;
}

.ohlc b {
  font-weight: 400;
  color: #9598a1;
}

.trade-row {
  display: flex;
  align-items: center;
  margin-top: 4px;
}

.trade {
  width: 41px;
  height: 23px;
  display: flex;
  flex-direction: column;
  align-items: center;
  justify-content: center;
  border-radius: 4px;
  font-size: 8.5px;
  line-height: 10px;
  background: #141823;
}

.sell {
  border: 1px solid #8a2a3a;
  color: #b0304a;
}

.buy {
  border: 1px solid #2a3f90;
  color: #3450b8;
}

.spread {
  width: 26px;
  text-align: center;
  font-size: 7.5px;
  font-weight: 700;
  color: #c8c8c8;
}

.legend-vol {
  margin-top: 4px;
  color: #b2b5be;
  line-height: 12px;
}

.val-red {
  color: #b83450;
}

.val-green {
  color: #2a9a7c;
}

.val-white {
  color: #fff;
  font-weight: 700;
}

.val-yellow {
  color: #e3e26c;
  font-weight: 700;
}

.val-plain {
  color: #d1d4dc;
}

.legend-hidden {
  display: flex;
  align-items: center;
  gap: 6px;
  margin-top: 3px;
  color: #555963;
}

.legend-hidden .icon {
  width: 12px;
  height: 12px;
  color: #9598a1;
}

.legend-collapse {
  display: flex;
  align-items: center;
  justify-content: center;
  width: 20px;
  height: 14px;
  margin: 3px 0 0 -2px;
  padding: 0;
  background: #141823;
  border: 1px solid #2a2e39;
  border-radius: 2px;
  color: #b2b5be;
}

.legend-collapse .icon {
  width: 10px;
  height: 10px;
}

.rsi-legend {
  position: absolute;
  left: 6px;
  top: 446px;
  height: 12px;
  padding-right: 2px;
  display: flex;
  gap: 4px;
  font-size: 8.7px;
  line-height: 12px;
  background: rgba(20, 24, 35, .55);
  white-space: nowrap;
}

.rsi-name {
  width: 118px;
  color: #9ea1aa;
}

.scale-btns {
  position: absolute;
  right: 3px;
  top: 1px;
  display: flex;
  gap: 3px;
  align-items: center;
  color: #b2b5be;
}

.scale-btn {
  width: 15px;
  height: 17px;
  display: flex;
  align-items: center;
  justify-content: center;
  border: 1px solid #2a2e39;
  border-radius: 3px;
  font-size: 8px;
}

.scale-btn .icon {
  width: 9px;
  height: 9px;
}

.scale-btn.wide {
  width: 33px;
}

.rangebar {
  height: 22px;
  flex: none;
  display: flex;
  align-items: center;
  padding-left: 147px;
  background: #0f0f0f;
  font-size: 10px;
  color: #d1d4dc;
  border-radius: 0 0 4px 0;
}

.range-all {
  font-weight: 700;
}

.range-sep {
  height: 15px;
  margin: 0 8px 0 6px;
  border-right: 1px solid #2e2e2e;
}

.clock {
  margin-left: auto;
  margin-right: 7px;
  font-size: 9.3px;
}

.bottomtabs {
  flex: 1;
  display: flex;
  align-items: center;
  gap: 22px;
  padding-left: 162px;
  background: #0f0f0f;
  font-size: 9.4px;
  color: #d1d4dc;
}

.bt-up {
  margin-left: auto;
  color: #aaa;
}

.bt-max {
  margin: 0 6px 0 -12px;
  color: #aaa;
}

/* watchlist + details */
.sidepanel {
  width: 151px;
  margin-right: 1px;
  flex: none;
  display: flex;
  flex-direction: column;
  gap: 2px;
}

.watchlist {
  height: 316px;
  flex: none;
  padding-top: 3px;
  overflow: hidden;
  background: #0f0f0f;
}

.wl-head {
  height: 24px;
  display: flex;
  align-items: center;
  padding-left: 10px;
  color: #d1d4dc;
}

.wl-title {
  font-size: 9.8px;
  font-weight: 700;
}

.wl-chev {
  width: 10px;
  height: 10px;
  margin: 0 13.5px 0 3px;
  color: #9598a1;
}

.wl-btn {
  width: 13px;
  height: 13px;
  margin-right: 12px;
  color: #b2b5be;
}

.wl-cols,
.wl-row {
  display: grid;
  grid-template-columns: 16px 18px 32px 25px 1fr;
  align-items: center;
  height: 20px;
  padding-left: 10px;
  padding-right: 11px;
  font-size: 9.3px;
  white-space: nowrap;
}

.wl-cols {
  position: relative;
  margin-top: 3px;
  margin-bottom: 4px;
  border-bottom: 1px solid #262626;
  font-size: 9px;
  color: #9598a1;
}

.wl-cols .flag {
  position: absolute;
  left: 1px;
  top: 5px;
  width: 6px;
  height: 9px;
  background: #555;
}

.wl-cols .c-sym {
  grid-column: 1 / 3;
  width: 22px;
}

.wl-row {
  border-top: 1px solid #1b1b1b;
}

.c-sym {
  overflow: hidden;
  padding-right: 2px;
  color: #e0e3eb;
}

.wl-cols .c-sym,
.wl-cols .c-last,
.wl-cols .c-chg {
  color: #9598a1;
}

.c-last {
  width: 27px;
  overflow: hidden;
  color: #e0e3eb;
  -webkit-mask-image: linear-gradient(to right, #000 70%, rgba(0, 0, 0, .3));
  mask-image: linear-gradient(to right, #000 70%, rgba(0, 0, 0, .3));
}

.c-last.val-red {
  color: #b83450;
}

.c-last.val-green {
  color: #2a9a7c;
}

.wl-cols .c-last {
  text-align: right;
  -webkit-mask-image: none;
  mask-image: none;
}

.c-chg {
  overflow: hidden;
  -webkit-mask-image: linear-gradient(to right, #000 75%, rgba(0, 0, 0, .3));
  mask-image: linear-gradient(to right, #000 75%, rgba(0, 0, 0, .3));
}

.wl-cols .c-chg {
  text-align: center;
  -webkit-mask-image: none;
  mask-image: none;
}

.c-pct {
  text-align: right;
}

.wl-group {
  height: 20px;
  margin-top: 4px;
  display: flex;
  align-items: center;
  gap: 5px;
  padding-left: 12px;
  font-size: 7.8px;
  color: #7c7f88;
}

.wl-group .icon {
  width: 9px;
  height: 9px;
}

.coin {
  position: relative;
  display: flex;
  align-items: center;
  justify-content: center;
  width: 10px;
  height: 10px;
  margin-top: 3px;
  border-radius: 50%;
  font-size: 9px;
  color: #ccc;
}

.coin::after {
  content: "";
  position: absolute;
  right: -3px;
  top: -3px;
  width: 6px;
  height: 6px;
  border-radius: 50%;
  background: #2fa58e;
}

.coin-do {
  background: #d8b64a;
}

.coin-co {
  background: #6a5018;
  width: 6px;
  height: 6px;
  margin-left: 2px;
}

.coin-ava {
  background: #d63a4c;
}

.coin-sol {
  background: #2a4a80;
  width: 7px;
  height: 7px;
  margin-left: 2px;
}

.coin-btc {
  background: #e9a040;
}

.coin-xrp {
  background: #181818;
}

.coin-pol {
  background: #6a1fd0;
}

.coin-kcs {
  background: #2aa88c;
}

.coin-sui {
  background: #dfe8ff;
}

.coin-shi {
  background: #d2303a;
}

.coin-usd {
  background: linear-gradient(#c03040 30%, #eee 30% 60%, #c03040 60%);
}

.details {
  flex: 1;
  min-height: 0;
  background: #0f0f0f;
  display: flex;
  flex-direction: column;
  align-items: center;
}

.det-head {
  align-self: stretch;
  height: 20px;
  margin-top: 5px;
  flex: none;
  display: flex;
  align-items: center;
  padding-left: 10px;
}

.det-head .coin {
  margin-top: 2px;
}

.det-name {
  width: 45px;
  margin-left: 11px;
  font-size: 9.5px;
  font-weight: 700;
  color: #e0e3eb;
}

.seasonal {
  margin-top: 3px;
  flex: none;
  display: block;
}

.sea-guide {
  stroke: #4a4a4a;
  stroke-width: 1;
  stroke-dasharray: 3 3;
  fill: none;
}

.sea-zero {
  stroke: #8e8e8e;
  stroke-width: 1;
}

.sea-2023 {
  fill: none;
  stroke: #7a14c8;
  stroke-width: 1.5;
}

.sea-2024 {
  fill: none;
  stroke: #a5134f;
  stroke-width: 1;
}

.sea-2025 {
  fill: none;
  stroke: #3a62e8;
  stroke-width: 2.6;
}

.sea-dot {
  fill: #3a62e8;
}

.sea-months {
  align-self: stretch;
  height: 16px;
  margin-top: 2px;
  padding-left: 10px;
  display: flex;
  gap: 44px;
  align-items: center;
  font-size: 8.5px;
  color: #b2b5be;
}

.sea-legend {
  height: 16px;
  margin-top: 4px;
  display: flex;
  align-items: center;
  gap: 13px;
  font-size: 8.5px;
  color: #787b86;
}

.sea-key {
  display: flex;
  align-items: center;
  gap: 3px;
}

.sea-key i {
  width: 5px;
  height: 5px;
  border-radius: 50%;
}

.key-2025 {
  background: #3a62e8;
}

.key-2024 {
  background: #a5134f;
}

.key-2023 {
  background: #7a14c8;
}

.pill-btn {
  height: 14px;
  padding: 0 8px;
  border: none;
  border-radius: 7px;
  background: #2a2a2a;
  color: #d1d4dc;
  font: 8.3px Roboto, sans-serif;
  flex: none;
}

.sea-legend + .pill-btn {
  margin-top: 8px;
}

.tech-title {
  align-self: stretch;
  margin-top: 16px;
  padding-left: 10px;
  font-size: 10px;
  font-weight: 700;
  line-height: 14px;
  color: #d1d4dc;
}

.gauge {
  flex: none;
  display: block;
}

.gauge-rest {
  fill: none;
  stroke: #4c4c4c;
  stroke-width: 4;
}

.gauge-on {
  fill: none;
  stroke: url(#gaugeGrad);
  stroke-width: 5;
}

.needle {
  stroke: #e8e8e8;
  stroke-width: 1.4;
}

.needle-hub {
  fill: #e8e8e8;
}

.g-label {
  font-size: 8.5px;
  fill: #626570;
}

.g-result {
  font-size: 11px;
  font-weight: 700;
  fill: #d1d4dc;
}

.tech-btn {
  margin-top: 8px;
}

.rightbar {
  width: 30px;
  flex: none;
  display: flex;
  flex-direction: column;
  justify-content: space-between;
  background: #0e0e0e;
  border-left: 1px solid #282828;
  color: #c8c8c8;
}

.rb-top {
  display: flex;
  flex-direction: column;
  align-items: center;
  padding-top: 4px;
}

.rb-bottom {
  display: flex;
  flex-direction: column;
  align-items: center;
  padding-bottom: 2px;
}

.rb-item {
  width: 25px;
  height: 31px;
  display: flex;
  align-items: center;
  justify-content: center;
}

.rb-item .icon {
  width: 18px;
  height: 18px;
}

.rb-top .rb-item:first-child {
  height: 25px;
  background: #2e2e2e;
  border-radius: 4px;
}

.rb-dots {
  width: 22px;
  height: 22px;
  border-radius: 50%;
  background: #f5f5f5;
  display: grid;
  grid-template-columns: repeat(3, 4px);
  grid-auto-rows: 4px;
  gap: 1px;
  justify-content: center;
  align-content: center;
}

.rb-dots i {
  background: #111;
  border-radius: 50%;
}

.rb-sep {
  width: 22px;
  margin: 2px 0 1px;
  border-top: 1px solid #333;
}

/* floating drawing bars */
.draw-bar {
  position: absolute;
  display: flex;
  align-items: center;
  background: #1a1a1a;
  color: #b4b4b4;
}

.draw-one {
  left: 633px;
  top: 72px;
  width: 497px;
  height: 25px;
}

.grip {
  width: 11px;
  height: 11px;
  color: #4a4a4a;
}

.draw-one .grip {
  margin: 0 2px 0 2.4px;
}

.draw-two {
  left: 640px;
  top: 97px;
  width: 290px;
  height: 21px;
}

.draw-two .grip {
  margin: 0 5px 0 1.5px;
}

.dt {
  width: 25.2px;
  flex: none;
  display: flex;
  justify-content: center;
}

.dt .icon {
  width: 15px;
  height: 15px;
}

.dt.blue {
  color: #2c4fa8;
}

.dt2 {
  width: 25.4px;
  height: 21px;
  flex: none;
  position: relative;
  display: flex;
  align-items: center;
  justify-content: center;
}

.dt2 .icon {
  width: 13px;
  height: 13px;
}

.under-blue::after,
.under-white::after {
  content: "";
  position: absolute;
  left: 6px;
  right: 6px;
  bottom: 3px;
  height: 2px;
  background: #3458c8;
}

.under-white::after {
  background: #fff;
}

.dt2.dash {
  width: 47px;
  gap: 3px;
  font-size: 9.5px;
  color: #c8c8c8;
}

.dash-line {
  width: 12px;
  height: 2px;
  background: #ddd;
}

.thin-line {
  width: 13px;
  height: 1px;
  background: #bbb;
}

.camera-box {
  position: absolute;
  left: 0;
  bottom: 0;
  width: 189px;
  height: 106px;
  background: #000;
  display: flex;
  align-items: center;
  justify-content: center;
  padding-left: 2px;
}

.camera-box p {
  margin: 0;
  font-size: 3.8px;
  line-height: 5px;
  color: #ddd;
  text-align: center;
}
```

FILE: chart.js
```js
// color, high, body top, body bottom, low, volume height - all in screen pixels
const BARS = [
  ["r",389,389,397,397,17],["r",396,396,402,402,15],["g",396,397,402,403,17],["r",397,397,398,403,12],
  ["r",397,398,417,427,24],["r",415,416,418,419,18],["g",404,405,418,419,20],["r",404,405,406,413,21],
  ["g",402,405,408,413,29],["g",391,401,406,408,37],["r",399,401,406,407,21],["r",405,405,408,409,16],
  ["r",407,407,411,412,15],["r",409,409,413,414,12],["r",412,412,421,422,16],["r",420,420,424,425,19],
  ["r",423,423,426,427,21],["r",425,425,428,429,13],["r",427,427,430,431,17],["r",429,429,432,433,19],
  ["g",426,426,431,433,19],["g",414,424,430,432,67],["r",422,424,431,432,30],["g",422,424,430,432,30],
  ["g",415,417,425,426,43],["g",408,411,418,420,36],["g",373,374,412,413,57],["g",342,352,375,393,110],
  ["r",351,352,363,373,55],["g",352,357,363,370,33],["g",268,271,358,367,73],["g",223,252,272,302,90],
  ["g",198,211,252,275,50],["r",204,211,263,285,30],["r",233,263,291,300,28],["g",245,281,291,305,32],
  ["r",273,281,298,305,19],["g",275,284,298,327,31],["g",269,282,283,290,23],["g",248,257,285,292,19],
  ["g",234,253,257,262,22],["r",251,253,270,282,18],["g",227,240,270,280,26],["r",225,240,244,290,27],
  ["g",133,150,244,255,54],["r",111,150,167,197,44],["r",145,166,175,183,15],["r",170,175,203,232,18],
  ["r",202,203,271,320,26],["r",262,271,272,300,23],["r",258,271,290,295,14],["g",258,270,290,307,17],
  ["r",265,270,286,295,13],["g",267,280,295,303,13],["g",245,273,281,283,15],["r",261,273,284,285,10],
  ["r",271,283,295,298,12],["r",290,295,312,317,14],["r",308,311,340,342,22],["g",312,315,340,348,20],
  ["r",313,315,336,358,20],["g",328,332,336,338,16],["g",295,297,332,333,20],["r",295,297,327,328,22],
  ["r",318,327,362,363,22],["r",353,362,367,383,26],["g",361,363,367,369,15],["g",323,329,364,365,21],
  ["r",327,329,362,363,17],["g",345,350,361,362,16],["g",337,347,351,352,16],["g",318,327,347,349,18],
  ["g",307,317,327,330,15],["r",315,317,329,346,18],["g",315,317,329,339,14],["r",312,317,318,320,14],
  ["r",315,317,336,346,12],["r",328,335,349,352,13],["g",293,301,349,355,20],["g",268,285,301,308,32],
  ["g",225,243,285,298,30],["g",210,226,244,250,27],["g",165,175,227,230,35],["r",167,175,195,257,30],
  ["r",187,194,275,292,29],["r",243,274,280,281,18],["g",236,237,279,283,15],["r",226,237,275,280,16],
  ["r",245,275,280,297,20],["g",252,279,280,287,19],["r",277,279,326,336,19],["r",325,325,341,360,27],
  ["r",327,340,341,346,20],["r",332,340,341,343,19],["g",340,341,345,350,28],["r",339,340,380,382,33],
  ["g",378,379,382,388,35],["g",367,369,378,381,20],["r",348,369,375,378,27],["r",368,375,392,393,28],
  ["g",368,369,392,393,38],["r",362,369,371,375,18],["g",355,358,371,373,24],["r",354,359,369,370,20],
  ["g",333,342,369,370,28],["r",329,341,352,355,29],["g",334,338,339,341,26],["r",345,348,364,365,23],
  ["g",358,362,364,366,22],["r",352,363,374,376,27],["r",372,374,389,391,29],["g",374,376,388,389,25],
  ["r",372,375,379,381,24],["g",358,362,378,380,26],["r",357,361,363,366,0]
];

const PRICE_Y = [119, 141.5, 164, 187, 209.5, 232, 255, 278, 300.5, 323, 345.5, 368, 391, 413.5, 436, 459, 481];
const RSI_Y = [552, 576, 600, 624];
const TIME_X = [178, 227, 276, 325, 370, 419, 468, 512, 561, 610, 660, 704, 754, 803, 847, 896, 945, 995, 1039];

const CANDLE_COLOR = { g: "#26a583", r: "#d8304f" };
const VOLUME_COLOR = { g: "#2b6f60", r: "#7f2e3a" };

function drawGrid() {
  let d = "";
  PRICE_Y.concat(RSI_Y, [528]).forEach(y => { d += `M37 ${y}H1057`; });
  TIME_X.forEach(x => { d += `M${x} 87V645`; });
  document.getElementById("grid").innerHTML = `<path d="${d}"/>`;
}

function drawBars() {
  let candles = "";
  let volume = "";
  BARS.forEach((bar, i) => {
    const [color, high, top, bottom, low, vol] = bar;
    const x = 40 + i * 5.5;
    candles += `<rect x="${x - 0.4}" y="${high}" width="0.8" height="${low - high}" fill="${CANDLE_COLOR[color]}"/>`;
    candles += `<rect x="${x - 1.9}" y="${top}" width="3.8" height="${bottom - top}" fill="${CANDLE_COLOR[color]}"/>`;
    if (vol > 0) {
      volume += `<rect x="${x - 2.2}" y="${527.5 - vol}" width="4.4" height="${vol}" fill="${VOLUME_COLOR[color]}"/>`;
    }
  });
  document.getElementById("candles").innerHTML = candles;
  document.getElementById("volume").innerHTML = volume;
}

drawGrid();
drawBars();
```
